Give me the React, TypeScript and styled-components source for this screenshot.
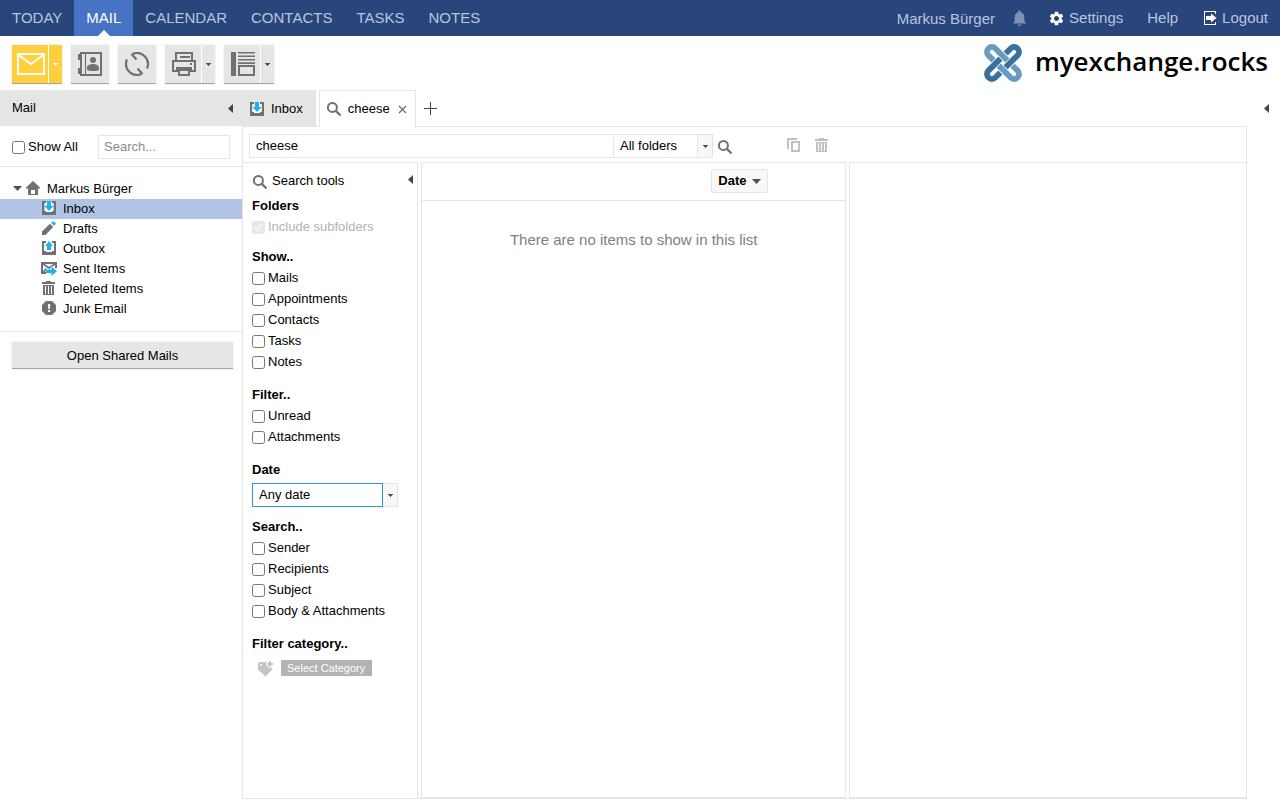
import React from "react";
import styled, { createGlobalStyle, css } from "styled-components";
import { MdSettings } from "react-icons/md";

const GREY = "#707173";
const LINE = "#e5e5e5";
const CYAN = "#15b5ef";

const GlobalStyle = createGlobalStyle`
  *, *::before, *::after { box-sizing: border-box; }
  body {
    margin: 0;
    background: #fff;
    color: #000;
    font: 13px/20px "Liberation Sans", Arial, sans-serif;
  }
  button, input, select { font: inherit; color: inherit; margin: 0; border-radius: 0; }
  button { border: 0; padding: 0; background: none; cursor: pointer; }
  ul { list-style: none; margin: 0; padding: 0; }
  svg { display: block; flex: none; }
`;

/* ---------- page frame ---------- */

const Page = styled.div`
  display: flex;
  flex-direction: column;
  min-height: 100vh;
  padding-bottom: 1px;
`;

const TopBar = styled.header`
  display: flex;
  justify-content: space-between;
  height: 36px;
  background: #28457c;
  font-size: 15px;
`;

const NavGroup = styled.nav`
  display: flex;
`;

const NavLink = styled.a<{ $active?: boolean }>`
  position: relative;
  display: flex;
  align-items: center;
  padding: 0 12px;
  color: #b9c5dc;
  text-decoration: none;
  ${(p) =>
    p.$active &&
    css`
      background: #4673c4;
      color: #fff;
      &::after {
        content: "";
        position: absolute;
        left: 50%;
        bottom: 0;
        margin-left: -6px;
        border: 6px solid transparent;
        border-top: 0;
        border-bottom-color: #fff;
      }
    `}
`;

const UserGroup = styled.div`
  display: flex;
  align-items: center;
  padding-right: 12px;
  color: #b9c5dc;
`;

const UserName = styled.span`
  display: flex;
  align-items: center;
  gap: 18px;
  padding-top: 1px;
  margin-right: 22px;
  svg { margin-bottom: 2px; }
`;

const UserLinks = styled.nav`
  display: flex;
  gap: 24px;
`;

const UserLink = styled.a`
  display: flex;
  align-items: center;
  gap: 4px;
  color: inherit;
  text-decoration: none;
  svg { color: #fff; }
`;

const ToolBar = styled.div`
  display: flex;
  justify-content: space-between;
  height: 54px;
  padding: 9px 12px 0;
`;

const ToolGroup = styled.div`
  display: flex;
  gap: 9px;
`;

const SplitButton = styled.div<{ $primary?: boolean }>`
  display: flex;
  height: 39px;
  border-bottom: 1px solid #a6a6a6;
  box-shadow: 0 0 1px #bbb;
  background: ${(p) => (p.$primary ? "#ffd03b" : "#e6e6e6")};
  color: ${(p) => (p.$primary ? "#fff" : GREY)};
`;

const ToolButton = styled.button<{ $wide?: boolean }>`
  display: flex;
  align-items: center;
  justify-content: center;
  width: ${(p) => (p.$wide ? 36 : 38)}px;
  padding-left: ${(p) => (p.$wide ? 2 : 0)}px;
`;

const ToolMenuButton = styled.button<{ $light?: boolean }>`
  display: flex;
  align-items: center;
  justify-content: center;
  width: 14px;
  border-left: 1px solid #fff;
  color: ${(p) => (p.$light ? "#fff" : "#505050")};
`;

const Brand = styled.a`
  display: flex;
  align-items: center;
  gap: 13px;
  height: 36px;
  color: #000;
  text-decoration: none;
  font: 600 26px/32px "Open Sans", "Noto Sans", sans-serif;
`;

const BrandName = styled.span`
  padding-bottom: 4px;
`;

const Body = styled.div`
  display: flex;
  flex: 1;
`;

/* ---------- sidebar ---------- */

const Sidebar = styled.aside`
  display: flex;
  flex-direction: column;
  flex: none;
  width: 242px;
`;

const SideHeader = styled.div`
  display: flex;
  align-items: center;
  justify-content: space-between;
  height: 36px;
  padding: 0 9px 0 12px;
  background: ${LINE};
  color: #000;
`;

const SideFilter = styled.div`
  display: flex;
  align-items: center;
  justify-content: space-between;
  height: 41px;
  padding: 2px 12px 0;
  border-bottom: 1px solid ${LINE};
`;

const CheckLabel = styled.label<{ $muted?: boolean; $level?: boolean }>`
  display: flex;
  align-items: center;
  gap: 3px;
  height: 21px;
  color: ${(p) => (p.$muted ? "#b3b3b3" : "inherit")};
  input {
    width: 13px;
    height: 13px;
    margin-top: ${(p) => (p.$level ? 0 : 2)}px;
    opacity: ${(p) => (p.$muted ? 0.5 : 1)};
  }
`;

const TextInput = styled.input`
  border: 1px solid ${LINE};
  height: 24px;
  padding: 0 6px 2px;
  outline: none;
  min-width: 0;
  &::placeholder { color: #8a8a8a; opacity: 1; }
`;

const FolderSearch = styled(TextInput)`
  width: 132px;
  padding: 0 5px 2px;
`;

const Tree = styled.ul`
  padding: 12px 0;
  border-bottom: 1px solid ${LINE};
`;

const TreeRow = styled.li<{ $selected?: boolean; $root?: boolean }>`
  display: flex;
  align-items: center;
  gap: 6px;
  height: 20px;
  padding-left: ${(p) => (p.$root ? 13 : 41)}px;
  background: ${(p) => (p.$selected ? "#b1c4e6" : "transparent")};
  svg { margin-bottom: 2px; color: ${GREY}; }
  svg:first-child { margin-right: ${(p) => (p.$root ? -3 : 0)}px; }
`;

const SharedButton = styled.button`
  height: 27px;
  margin: 10px 9px 0 12px;
  padding-top: 1px;
  background: #e6e6e6;
  border-bottom: 1px solid #a6a6a6;
  box-shadow: 0 0 1px #bbb;
`;

/* ---------- content ---------- */

const Content = styled.main`
  display: flex;
  flex-direction: column;
  flex: 1;
  min-width: 0;
`;

const TabBar = styled.div`
  display: flex;
  align-items: center;
  height: 36px;
  padding-right: 11px;
`;

const Tab = styled.div<{ $active?: boolean }>`
  display: flex;
  align-items: center;
  gap: 6px;
  ${(p) =>
    p.$active
      ? css`
          position: relative;
          height: 37px;
          margin: 1px 0 0 3px;
          padding: 0 8px 0 6px;
          border: 1px solid ${LINE};
          border-bottom: 0;
          background: #fff;
          button { margin-left: 2px; }
        `
      : css`
          height: 36px;
          padding: 1px 13px 0 7px;
          background: ${LINE};
        `}
`;

const NewTabButton = styled.button`
  margin-left: 8px;
`;

const PushRight = styled.button`
  margin-left: auto;
`;

const Workspace = styled.section`
  display: flex;
  flex-direction: column;
  flex: 1;
  margin-right: 33px;
  border: 1px solid ${LINE};
`;

const QueryBar = styled.div`
  display: flex;
  align-items: center;
  height: 35px;
  padding: 3px 6px 0;
`;

const QueryInput = styled(TextInput)`
  flex: 0 1 365px;
`;

const Combo = styled.div<{ $focused?: boolean; $width: number }>`
  display: flex;
  height: 24px;
  width: ${(p) => p.$width}px;
  margin-top: ${(p) => (p.$focused ? 3 : 0)}px;
  select {
    flex: 1;
    min-width: 0;
    appearance: none;
    outline: none;
    padding: 0 6px;
    background: #fff;
    border: 1px solid ${(p) => (p.$focused ? "#2f94de" : LINE)};
    border-left-width: ${(p) => (p.$focused ? 1 : 0)}px;
  }
`;

const ComboArrow = styled.span`
  display: flex;
  align-items: center;
  justify-content: center;
  width: 15px;
  border: 1px solid ${LINE};
  border-left: 0;
  background: #f8f8f8;
  color: #505050;
`;

const IconButton = styled.button`
  color: ${GREY};
  margin: 2px 0 0 4px;
  &:disabled { color: #c1c1c1; margin: 0 0 0 12px; }
`;

const QueryActions = styled.div`
  display: flex;
  align-items: center;
  margin-left: 41px;
  padding-bottom: 2px;
`;

const Panes = styled.div`
  display: flex;
  gap: 3px;
  flex: 1;
`;

const ToolsPane = styled.form`
  flex: none;
  width: 175px;
  padding: 7px 4px 12px 9px;
  border: solid ${LINE};
  border-width: 1px 1px 0 0;
`;

const ToolsTitle = styled.div`
  display: flex;
  align-items: center;
  gap: 4px;
  height: 22px;
  margin-bottom: 3px;
  svg:first-child { margin-top: 2px; }
  button { margin: 0 0 6px auto; }
`;

const Group = styled.fieldset<{ $after: number }>`
  margin: 0 0 ${(p) => p.$after}px;
  padding: 0;
  border: 0;
  legend {
    padding: 0;
    font-weight: bold;
    line-height: 21px;
  }
`;

const CategoryRow = styled.div`
  display: flex;
  align-items: flex-start;
  gap: 7px;
  padding: 6px 0 0 5px;
`;

const CategoryButton = styled.button`
  height: 16px;
  padding: 0 7px 0 6px;
  background: #b3b3b3;
  color: #fff;
  font-size: 11px;
  line-height: 16px;
`;

const ListPane = styled.div`
  flex: 425 1 0;
  border: 1px solid ${LINE};
  min-width: 0;
`;

const ListHeader = styled.div`
  display: flex;
  justify-content: flex-end;
  height: 38px;
  padding: 6px 77px 0 0;
  border-bottom: 1px solid ${LINE};
`;

const SortButton = styled.button`
  display: flex;
  align-items: center;
  gap: 6px;
  height: 24px;
  padding: 0 6px;
  border: 1px solid ${LINE};
  border-radius: 2px;
  background: #f8f8f8;
  font-weight: bold;
`;

const EmptyNote = styled.p`
  margin: 29px 0 0;
  text-align: center;
  font-size: 15px;
  color: #808080;
`;

const PreviewPane = styled.div`
  flex: 397 1 0;
  border: 1px solid ${LINE};
  border-right: 0;
`;

/* ---------- icons ---------- */

const CaretDown = () => (
  <svg width="5" height="3" viewBox="0 0 5 3" fill="currentColor" shapeRendering="crispEdges">
    <path d="M0 0h5v1H4v1H3v1H2V2H1V1H0z" />
  </svg>
);
const BigCaret = () => (
  <svg width="9" height="5" viewBox="0 0 9 5" fill="#505050"><path d="M0 0h9L4.500 5z" /></svg>
);
const CaretLeft = () => (
  <svg width="5" height="9" viewBox="0 0 5 9" fill="#444"><path d="M5 0v9L0 4.500z" /></svg>
);

const BrandMark = () => (
  <svg width="38" height="38" viewBox="-19 -19 38 38" fill="none">
    <g transform="rotate(-45)">
      <rect x="-4.900" y="-20.600" width="9.800" height="41.200" rx="4.900" stroke="#6b9abf" strokeWidth="5.800" />
      <path d="M-9.500 -4.900H-.5M.5 4.900H9.500" stroke="#fff" strokeWidth="7.400" />
      <rect x="-20.600" y="-4.900" width="41.200" height="9.800" rx="4.900" stroke="#36719f" strokeWidth="5.800" />
      <path d="M4.900 -9V-.8M-4.900 9V.8" stroke="#fff" strokeWidth="7.400" />
      <path d="M4.900 -10V0M-4.900 10V0" stroke="#6b9abf" strokeWidth="5.800" />
    </g>
  </svg>
);

const BellIcon = () => (
  <svg width="13" height="16" viewBox="4 2 16 20" fill="#8091b3">
    <path d="M12 22c1.100 0 2-.9 2-2h-4c0 1.100.9 2 2 2zM18 16v-5c0-3.070-1.640-5.640-4.500-6.320V4c0-.83-.67-1.500-1.500-1.500s-1.500.67-1.500 1.500v.68C7.630 5.360 6 7.920 6 11v5l-2 2v1h16v-1z" />
  </svg>
);

const LogoutIcon = () => (
  <svg width="16" height="14" viewBox="-2 0 16 14" fill="currentColor">
    <path d="M0 0h12v3h-1V1H1v12h10v-2h1v3H0z" />
    <path d="M2 5h5V2.500L12.500 7 7 11.500V9H2z" />
  </svg>
);

const NewMailIcon = () => (
  <svg width="28" height="22" viewBox="0 0 28 22" fill="none" stroke="currentColor" strokeWidth="2">
    <path d="M1 1h26v20H1zM1 1.500l13 9.500 13-9.500" />
  </svg>
);
const ContactsIcon = () => (
  <svg width="24" height="24" viewBox="0 0 24 24" fill="none" stroke="currentColor">
    <path d="M3 1h20v22H3z" strokeWidth="2" />
    <path d="M7.500 1v22" strokeWidth="1.200" />
    <path d="M0 2h3v6H0zM0 16h3v6H0z" fill="currentColor" stroke="none" />
    <circle cx="15" cy="8" r="3" fill="currentColor" stroke="none" />
    <path d="M9 18v-2c0-3 3-4 6-4s6 1 6 4v2c-2 1.400-10 1.400-12 0z" fill="currentColor" stroke="none" />
  </svg>
);
const RefreshIcon = () => (
  <svg width="24" height="24" viewBox="0 0 24 24" fill="none" stroke="currentColor" strokeWidth="2.200">
    <path d="M7.500 2A11 11 0 0 1 22 16.500M16.500 22A11 11 0 0 1 2 7.500M6.500 2l5 5.500M12.500 16.500l5 5.500" />
  </svg>
);
const PrintIcon = () => (
  <svg width="24" height="24" viewBox="0 0 24 24" fill="none" stroke="currentColor" strokeWidth="2">
    <path d="M4 9V1h16v8M8 5h10M1 9h22v10H1z" />
    <path d="M4 15h16v5H4z" fill="currentColor" stroke="none" />
    <path d="M7 18h10v5H7z" fill="#e6e6e6" />
    <path d="M18 12h2" />
  </svg>
);
const LayoutIcon = () => (
  <svg width="24" height="24" viewBox="0 0 24 24" fill="currentColor">
    <path d="M0 0h5v24H0zM7 0h17v1.600H7zM7 3.400h17V5H7zM7 6.900h17v1.600H7zM7 10.300h17v1.600H7z" />
    <path d="M8 14h15v9H8z" fill="none" stroke="currentColor" strokeWidth="2" />
  </svg>
);

const BoxIcon = ({ up }: { up?: boolean }) => (
  <svg width="16" height="16" viewBox="0 0 16 16">
    <path d="M4 2h8v10H4z" fill="#fff" />
    <path d="M1 1h4v2H3v8h2v1h6v-1h2V3h-2V1h4v14H1z" fill={GREY} />
    <path d={up ? "M6 10V6H4l4-5 4 5h-2v4z" : "M6 1h4v5h2.500L8 11 3.500 6H6z"} fill={CYAN} />
  </svg>
);
const PencilIcon = () => (
  <svg width="16" height="16" viewBox="0 0 16 16">
    <path d="M1 15v-3.500L9 3.800 12.200 7 4.500 15z" fill={GREY} />
    <path d="M10.200 3l2-2L15 3.800l-2 2z" fill={CYAN} />
  </svg>
);
const SentIcon = () => (
  <svg width="16" height="16" viewBox="0 0 16 16">
    <path d="M1 3h14v10H1z" fill="#fff" stroke={GREY} strokeWidth="2" />
    <path d="M1.500 3.500L8 8l6.500-4.500M2 12.500l3.500-4" fill="none" stroke={GREY} strokeWidth="1.800" />
    <path d="M5 9h5V6.500h6V16h-6v-1H5z" fill="#fff" />
    <path d="M5 9.500h5.500V6.500L16 11.300l-5.500 4.700v-3H5z" fill={CYAN} />
    <path d="M14 3h2v5h-2z" fill={GREY} />
  </svg>
);
const TrashIcon = () => (
  <svg width="16" height="16" viewBox="0 0 16 16" fill="currentColor" shapeRendering="crispEdges">
    <path d="M1 2h4V1h5v1h4v2H1zM2 5h11v10H2zm2 1v8h1V6zm3 0v8h1V6zm3 0v8h1V6z" fillRule="evenodd" />
  </svg>
);
const JunkIcon = () => (
  <svg width="16" height="16" viewBox="0 0 16 16">
    <path d="M5 1h6l4 4v6l-4 4H5l-4-4V5z" fill={GREY} />
    <path d="M7 4h2.200l-.3 5H7.300zM7 10h2.200v2H7z" fill="#fff" />
  </svg>
);
const HomeIcon = () => (
  <svg width="16" height="16" viewBox="0 0 16 16">
    <path d="M8 1l7 6.500V8.500h-2V15H3V8.500H1V7.500zM6 10v4h4v-4z" fill={GREY} fillRule="evenodd" />
  </svg>
);
const SearchIcon = () => (
  <svg width="16" height="16" viewBox="0 0 16 16" fill="none" stroke={GREY}>
    <circle cx="6.400" cy="6.400" r="4.500" strokeWidth="2" />
    <path d="M9.600 9.600l4.900 4.900" strokeWidth="2.200" />
  </svg>
);
const CopyIcon = () => (
  <svg width="16" height="16" viewBox="0 0 16 16" fill="none" stroke="currentColor" strokeWidth="2">
    <path d="M2 12V2h9" />
    <path d="M6 5h7v9H6z" />
  </svg>
);
const TagIcon = () => (
  <svg width="17" height="17" viewBox="0 0 17 17">
    <path d="M1 3.500L2.500 2H9.500l6 7L8.500 16.500 1 9.500z" fill="#c4c4c4" />
    <circle cx="4" cy="5" r="1" fill="#fff" />
    <path d="M13 0v8M9 4h8" stroke="#fff" strokeWidth="3.600" />
    <path d="M13 1v6M10 4h6" stroke="#c4c4c4" strokeWidth="2" />
  </svg>
);

/* ---------- data ---------- */

const modules = ["TODAY", "MAIL", "CALENDAR", "CONTACTS", "TASKS", "NOTES"];

const folders = [
  { name: "Inbox", icon: <BoxIcon />, selected: true },
  { name: "Drafts", icon: <PencilIcon /> },
  { name: "Outbox", icon: <BoxIcon up /> },
  { name: "Sent Items", icon: <SentIcon /> },
  { name: "Deleted Items", icon: <TrashIcon /> },
  { name: "Junk Email", icon: <JunkIcon /> },
];

function CheckGroup({ title, items, after }: { title: string; items: string[]; after: number }) {
  return (
    <Group $after={after}>
      <legend>{title}</legend>
      {items.map((item) => (
        <CheckLabel key={item}>
          <input type="checkbox" />
          {item}
        </CheckLabel>
      ))}
    </Group>
  );
}

export default function App() {
  return (
    <Page>
      <GlobalStyle />
      <TopBar>
        <NavGroup>
          {modules.map((m) => (
            <NavLink key={m} href="#" $active={m === "MAIL"}>{m}</NavLink>
          ))}
        </NavGroup>
        <UserGroup>
          <UserName>
            Markus Bürger
            <BellIcon />
          </UserName>
          <UserLinks>
            <UserLink href="#"><MdSettings size={17} />Settings</UserLink>
            <UserLink href="#">Help</UserLink>
            <UserLink href="#"><LogoutIcon />Logout</UserLink>
          </UserLinks>
        </UserGroup>
      </TopBar>

      <ToolBar>
        <ToolGroup>
          <SplitButton $primary>
            <ToolButton $wide aria-label="New mail"><NewMailIcon /></ToolButton>
            <ToolMenuButton $light aria-label="New item menu"><CaretDown /></ToolMenuButton>
          </SplitButton>
          <SplitButton>
            <ToolButton aria-label="Address book"><ContactsIcon /></ToolButton>
          </SplitButton>
          <SplitButton>
            <ToolButton aria-label="Refresh"><RefreshIcon /></ToolButton>
          </SplitButton>
          <SplitButton>
            <ToolButton $wide aria-label="Print"><PrintIcon /></ToolButton>
            <ToolMenuButton aria-label="Print menu"><CaretDown /></ToolMenuButton>
          </SplitButton>
          <SplitButton>
            <ToolButton $wide aria-label="Layout"><LayoutIcon /></ToolButton>
            <ToolMenuButton aria-label="Layout menu"><CaretDown /></ToolMenuButton>
          </SplitButton>
        </ToolGroup>
        <Brand href="#"><BrandMark /><BrandName>myexchange.rocks</BrandName></Brand>
      </ToolBar>

      <Body>
        <Sidebar>
          <SideHeader>
            Mail
            <button aria-label="Collapse sidebar"><CaretLeft /></button>
          </SideHeader>
          <SideFilter>
            <CheckLabel $level><input type="checkbox" />Show All</CheckLabel>
            <FolderSearch type="text" placeholder="Search..." aria-label="Search folders" />
          </SideFilter>
          <Tree>
            <TreeRow $root><BigCaret /><HomeIcon />Markus Bürger</TreeRow>
            {folders.map((f) => (
              <TreeRow key={f.name} $selected={f.selected}>{f.icon}{f.name}</TreeRow>
            ))}
          </Tree>
          <SharedButton>Open Shared Mails</SharedButton>
        </Sidebar>

        <Content>
          <TabBar>
            <Tab><BoxIcon />Inbox</Tab>
            <Tab $active>
              <SearchIcon />
              cheese
              <button aria-label="Close tab">
                <svg width="9" height="9" viewBox="0 0 9 9" stroke="#666" strokeWidth="1.100"><path d="M1 1l7 7M8 1L1 8" /></svg>
              </button>
            </Tab>
            <NewTabButton aria-label="New tab">
              <svg width="13" height="13" viewBox="0 0 13 13" stroke="#444"><path d="M6.500 0v13M0 6.500h13" /></svg>
            </NewTabButton>
            <PushRight aria-label="Show side panel"><CaretLeft /></PushRight>
          </TabBar>

          <Workspace>
            <QueryBar>
              <QueryInput type="text" defaultValue="cheese" aria-label="Search query" />
              <Combo $width={99}>
                <select aria-label="Folder scope"><option>All folders</option></select>
                <ComboArrow><CaretDown /></ComboArrow>
              </Combo>
              <IconButton aria-label="Search"><SearchIcon /></IconButton>
              <QueryActions>
                <IconButton disabled aria-label="Copy"><CopyIcon /></IconButton>
                <IconButton disabled aria-label="Delete"><TrashIcon /></IconButton>
              </QueryActions>
            </QueryBar>
            <Panes>
              <ToolsPane>
                <ToolsTitle>
                  <SearchIcon />
                  Search tools
                  <button type="button" aria-label="Collapse search tools"><CaretLeft /></button>
                </ToolsTitle>
                <Group $after={9}>
                  <legend>Folders</legend>
                  <CheckLabel $muted><input type="checkbox" defaultChecked disabled />Include subfolders</CheckLabel>
                </Group>
                <CheckGroup title="Show.." items={["Mails", "Appointments", "Contacts", "Tasks", "Notes"]} after={12} />
                <CheckGroup title="Filter.." items={["Unread", "Attachments"]} after={12} />
                <Group $after={9}>
                  <legend>Date</legend>
                  <Combo $focused $width={146}>
                    <select aria-label="Date range"><option>Any date</option></select>
                    <ComboArrow><CaretDown /></ComboArrow>
                  </Combo>
                </Group>
                <CheckGroup title="Search.." items={["Sender", "Recipients", "Subject", "Body & Attachments"]} after={12} />
                <Group $after={0}>
                  <legend>Filter category..</legend>
                  <CategoryRow>
                    <TagIcon />
                    <CategoryButton type="button">Select Category</CategoryButton>
                  </CategoryRow>
                </Group>
              </ToolsPane>
              <ListPane>
                <ListHeader>
                  <SortButton>Date<BigCaret /></SortButton>
                </ListHeader>
                <EmptyNote>There are no items to show in this list</EmptyNote>
              </ListPane>
              <PreviewPane />
            </Panes>
          </Workspace>
        </Content>
      </Body>
    </Page>
  );
}
